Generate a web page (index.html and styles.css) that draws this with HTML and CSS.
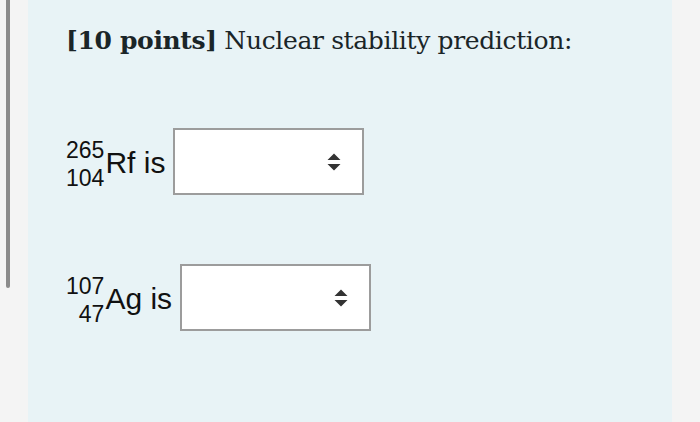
FILE: index.html
```html
<!DOCTYPE html>
<html>
<head>
<meta charset="utf-8">
<link rel="stylesheet" href="styles.css">
</head>
<body>
<div class="page">
  <div class="gutter"><div class="bar"></div></div>
  <main class="panel">
    <h1 class="title"><strong>[10 points]</strong> Nuclear stability prediction:</h1>
    <div class="row row-first">
      <div class="label">
        <span class="nuclide"><span>265</span><span>104</span></span>
        <span class="sym">Rf is</span>
      </div>
      <div class="select">
        <svg class="arrows" width="14" height="18" viewBox="0 0 14 18"><path d="M7 0.5 L13.5 7 H0.5 Z M0.5 11 H13.5 L7 17.5 Z" fill="#333"/></svg>
      </div>
    </div>
    <div class="row row-second">
      <div class="label">
        <span class="nuclide"><span>107</span><span>47</span></span>
        <span class="sym">Ag is</span>
      </div>
      <div class="select">
        <svg class="arrows" width="14" height="18" viewBox="0 0 14 18"><path d="M7 0.5 L13.5 7 H0.5 Z M0.5 11 H13.5 L7 17.5 Z" fill="#333"/></svg>
      </div>
    </div>
  </main>
  <div class="gutter-right"></div>
</div>
</body>
</html>
```
FILE: styles.css
```css
html, body {
  margin: 0;
  padding: 0;
  background: #f4f4f4;
}
.page {
  display: flex;
  width: 700px;
  height: 422px;
  overflow: hidden;
}
.gutter {
  width: 28px;
  flex: none;
}
.bar {
  margin-left: 6px;
  width: 4px;
  height: 288px;
  background: #8b8b8b;
  border-radius: 0 0 2px 2px;
}
.panel {
  width: 644px;
  flex: none;
  background: #e8f3f6;
  padding: 25px 0 0 38px;
  box-sizing: border-box;
}
.gutter-right {
  flex: 1;
}
.title {
  margin: 0;
  font-family: "DejaVu Serif", serif;
  font-size: 25px;
  letter-spacing: -0.35px;
  line-height: 32px;
  font-weight: normal;
  color: #1a2528;
}
.title strong {
  font-weight: bold;
}
.row {
  display: flex;
  align-items: center;
  font-family: "Liberation Sans", Arial, sans-serif;
  color: #111;
}
.row-first {
  margin-top: 71px;
}
.row-second {
  margin-top: 69px;
}
.label {
  display: flex;
  align-items: center;
  margin-right: 8px;
}
.nuclide {
  display: flex;
  flex-direction: column;
  align-items: flex-end;
  font-size: 23px;
  line-height: 28px;
  margin-top: 4px;
}
.sym {
  font-size: 30px;
  line-height: 34px;
  margin-left: 1px;
  margin-top: 2px;
}
.select {
  width: 191px;
  height: 67px;
  box-sizing: border-box;
  border: 2px solid #9c9c9c;
  background: #fff;
  display: flex;
  align-items: center;
  justify-content: flex-end;
  padding-right: 21px;
}
.arrows {
  display: block;
}
```
